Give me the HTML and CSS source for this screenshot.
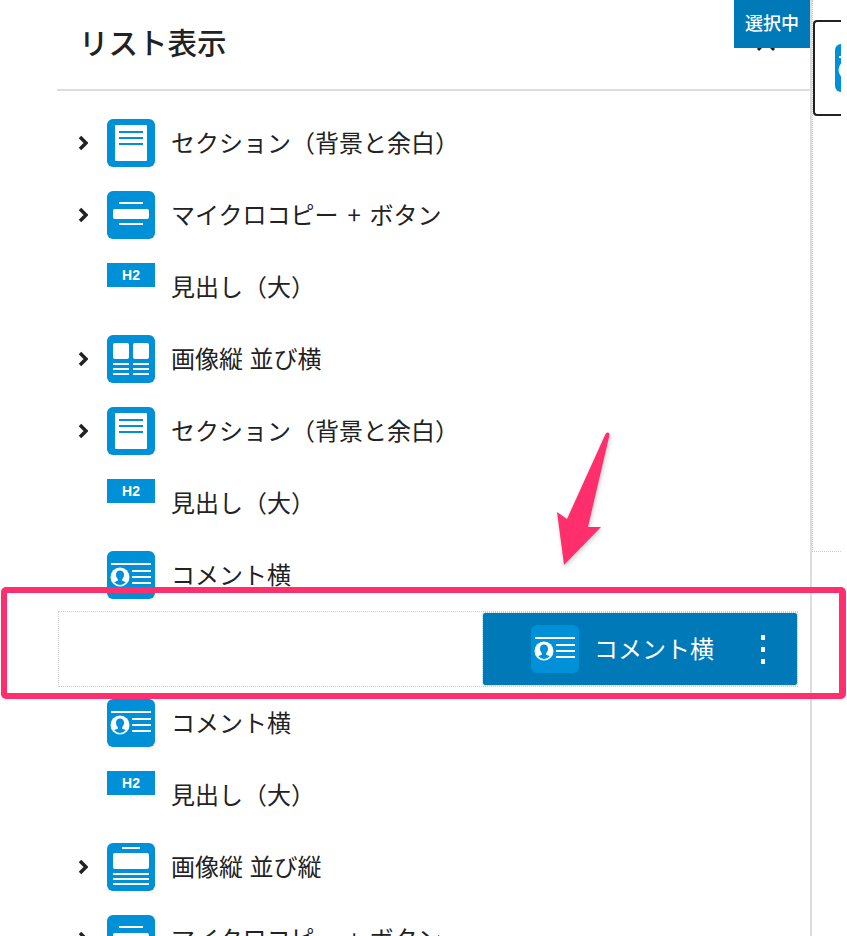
FILE: index.html
```html
<!DOCTYPE html>
<html lang="ja">
  <head>
    <meta charset="utf-8">
    <link rel="stylesheet" href="styles.css">
  </head>
  <body>
    <!-- Icon set for the block list -->
    <svg class="icon-defs" width="0" height="0">
      <symbol id="icon-section" viewBox="0 0 48 48">
        <rect width="48" height="48" rx="6" fill="#0090d7"/>
        <rect x="8" y="6" width="32" height="36" rx="1" fill="#fff"/>
        <path d="M12 13h24M12 19h24M12 25h24" stroke="#0090d7" stroke-width="2"/>
      </symbol>
      <symbol id="icon-button" viewBox="0 0 48 48">
        <rect width="48" height="48" rx="6" fill="#0090d7"/>
        <rect x="6" y="18" width="36" height="10" rx="2" fill="#fff"/>
        <path d="M12 12h24M12 33h24" stroke="#fff" stroke-width="2"/>
      </symbol>
      <symbol id="icon-image-row" viewBox="0 0 48 48">
        <rect width="48" height="48" rx="6" fill="#0090d7"/>
        <rect x="6" y="8" width="16" height="16" rx="2" fill="#fff"/>
        <rect x="26" y="8" width="16" height="16" rx="2" fill="#fff"/>
        <path d="M6 29h16M6 34h16M6 39h16M26 29h16M26 34h16M26 39h16" stroke="#fff" stroke-width="2"/>
      </symbol>
      <symbol id="icon-image-col" viewBox="0 0 48 48">
        <rect width="48" height="48" rx="6" fill="#0090d7"/>
        <rect x="6" y="10" width="36" height="16" rx="2" fill="#fff"/>
        <path d="M15 5h18M6 31h36M6 36h36M6 41h36" stroke="#fff" stroke-width="2"/>
      </symbol>
      <symbol id="icon-comment" viewBox="0 0 48 48">
        <rect width="48" height="48" rx="6" fill="#0090d7"/>
        <path d="M4 13h40M25 20h19M25 26h19M25 32h19" stroke="#fff" stroke-width="2"/>
        <circle cx="13" cy="26" r="9.500" fill="#fff"/>
        <path d="M13 19.500c-2.500 0-4 1.900-4 4.200 0 1.900.8 3.300 1.800 4.300v1.700c-1.600.5-2.800 1-3.500 1.600a7.500 7.500 0 0 0 11.400 0c-.7-.6-1.900-1.100-3.500-1.600V28c1-1 1.800-2.400 1.800-4.300 0-2.300-1.500-4.200-4-4.200z" fill="#0090d7"/>
      </symbol>
      <symbol id="chevron" viewBox="0 0 10 16">
        <path d="M2 2l6 6-6 6" fill="none" stroke="#222" stroke-width="3.500"/>
      </symbol>
    </svg>

    <div class="page">
      <div class="panel">
        <div class="panel-head">
          <h2 class="panel-title">リスト表示</h2>
          <svg class="collapse" width="20" height="12" viewBox="0 0 20 12"><path d="M2 10l8-8 8 8" fill="none" stroke="#222" stroke-width="3"/></svg>
        </div>

        <div class="list">
          <div class="row">
            <svg class="arrow"><use href="#chevron"/></svg>
            <svg class="icon"><use href="#icon-section"/></svg>
            <span class="label">セクション（背景と余白）</span>
          </div>
          <div class="row">
            <svg class="arrow"><use href="#chevron"/></svg>
            <svg class="icon"><use href="#icon-button"/></svg>
            <span class="label label-spaced">マイクロコピー + ボタン</span>
          </div>
          <div class="row">
            <span class="h2-tag">H2</span>
            <span class="label">見出し（大）</span>
          </div>
          <div class="row">
            <svg class="arrow"><use href="#chevron"/></svg>
            <svg class="icon"><use href="#icon-image-row"/></svg>
            <span class="label">画像縦 並び横</span>
          </div>
          <div class="row">
            <svg class="arrow"><use href="#chevron"/></svg>
            <svg class="icon"><use href="#icon-section"/></svg>
            <span class="label">セクション（背景と余白）</span>
          </div>
          <div class="row">
            <span class="h2-tag">H2</span>
            <span class="label">見出し（大）</span>
          </div>
          <div class="row">
            <svg class="icon"><use href="#icon-comment"/></svg>
            <span class="label">コメント横</span>
          </div>

          <!-- ドラッグ中のブロック -->
          <div class="drop-slot">
            <div class="drag-bar">
              <svg class="icon"><use href="#icon-comment"/></svg>
              <span class="drag-label">コメント横</span>
              <div class="kebab"><i></i><i></i><i></i></div>
            </div>
          </div>

          <div class="row">
            <svg class="icon"><use href="#icon-comment"/></svg>
            <span class="label">コメント横</span>
          </div>
          <div class="row">
            <span class="h2-tag">H2</span>
            <span class="label">見出し（大）</span>
          </div>
          <div class="row">
            <svg class="arrow"><use href="#chevron"/></svg>
            <svg class="icon"><use href="#icon-image-col"/></svg>
            <span class="label">画像縦 並び縦</span>
          </div>
          <div class="row">
            <svg class="arrow"><use href="#chevron"/></svg>
            <svg class="icon"><use href="#icon-button"/></svg>
            <span class="label label-spaced">マイクロコピー + ボタン</span>
          </div>
        </div>
      </div>

      <div class="side">
        <div class="side-top">
          <div class="preview">
            <svg class="icon"><use href="#icon-comment"/></svg>
          </div>
        </div>
      </div>
    </div>

    <!-- Overlays -->
    <div class="badge">選択中</div>
    <div class="highlight"></div>
    <svg class="pointer" width="70" height="150" viewBox="550 425 70 150">
      <path d="M605.500 434c1-2.500 4.500-2 4 1L588 527h13l-37 38-7-53 10 7z" fill="#ff2f6e"/>
    </svg>
  </body>
</html>
```

FILE: styles.css
```css
* {
  box-sizing: border-box;
}

html,
body {
  margin: 0;
  height: 936px;
  overflow: hidden;
  background: #fff;
}

body {
  position: relative;
  font-family: "Noto Sans CJK JP", "Liberation Sans", sans-serif;
  color: #222;
}

.icon-defs {
  position: absolute;
}

.page {
  display: flex;
  height: 936px;
}

/* Left list panel */
.panel {
  width: 812px;
  padding-left: 57px;
  border-right: 2px solid #ddd;
  flex-shrink: 0;
}

.panel-head {
  display: flex;
  align-items: center;
  justify-content: space-between;
  height: 91px;
  padding: 0 34px 6px 22px;
  border-bottom: 2px solid #ddd;
}

.panel-title {
  margin: 0;
  font-size: 29.500px;
  font-weight: 500;
  line-height: 1;
}

/* mostly hidden behind the badge */
.collapse {
  display: block;
  margin-top: 8px;
}

.list {
  padding-top: 16px;
}

.row {
  display: flex;
  align-items: center;
  position: relative;
  height: 72px;
  padding: 12px 0 12px 50px;
}

.arrow {
  position: absolute;
  left: 21px;
  top: 28px;
  width: 10px;
  height: 16px;
}

.icon {
  display: block;
  width: 48px;
  height: 48px;
  flex-shrink: 0;
}

.label {
  margin: 0 0 2px 16px;
  font-size: 24px;
  line-height: 1.2;
  white-space: nowrap;
  word-spacing: 1px;
}

.label-spaced {
  word-spacing: 3.500px;
}

.h2-tag {
  align-self: flex-start;
  width: 48px;
  height: 24px;
  flex-shrink: 0;
  background: #0090d7;
  color: #fff;
  font-family: "Liberation Sans", sans-serif;
  font-size: 14px;
  font-weight: 700;
  line-height: 24px;
  text-align: center;
}

/* Drop target with the block being dragged */
.drop-slot {
  display: flex;
  justify-content: flex-end;
  width: 740px;
  height: 76px;
  margin-left: 1px;
  padding: 1px 0;
  border: 1px dotted #ccc;
}

.drag-bar {
  display: flex;
  align-items: center;
  width: 314px;
  height: 72px;
  padding-left: 48px;
  background: #0079b8;
  border-radius: 2px;
  outline: 1px dotted #a8d4ea;
}

.drag-label {
  margin: 0 0 2px 15px;
  font-size: 24px;
  line-height: 1.2;
  color: #fff;
}

.kebab {
  display: flex;
  flex-direction: column;
  gap: 7px;
  margin-left: auto;
  margin-right: 32px;
}

.kebab i {
  display: block;
  width: 4px;
  height: 5px;
  background: #fff;
}

/* Right edge of the editor */
.side {
  width: 29px;
  flex-shrink: 0;
}

.side-top {
  height: 552px;
  padding-top: 20px;
  border-left: 1px dotted #ccc;
  border-bottom: 1px dotted #ccc;
}

.preview {
  height: 96px;
  padding: 22px 0 0 20px;
  overflow: hidden;
  border: 2px solid #222;
  border-right: 0;
  border-radius: 4px 0 0 4px;
}

/* Overlays */
.badge {
  position: absolute;
  top: 0;
  left: 734px;
  width: 76px;
  height: 48px;
  background: #0079b8;
  color: #fff;
  font-size: 18px;
  font-weight: 500;
  line-height: 45px;
  text-align: center;
}

.highlight {
  position: absolute;
  top: 587px;
  left: 1px;
  width: 845px;
  height: 112px;
  border: 6px solid #ff2f6e;
  border-right-width: 7px;
  border-radius: 5px;
}

.pointer {
  position: absolute;
  top: 425px;
  left: 550px;
  filter: drop-shadow(1px 2px 2px rgba(0, 0, 0, 0.2));
}
```
